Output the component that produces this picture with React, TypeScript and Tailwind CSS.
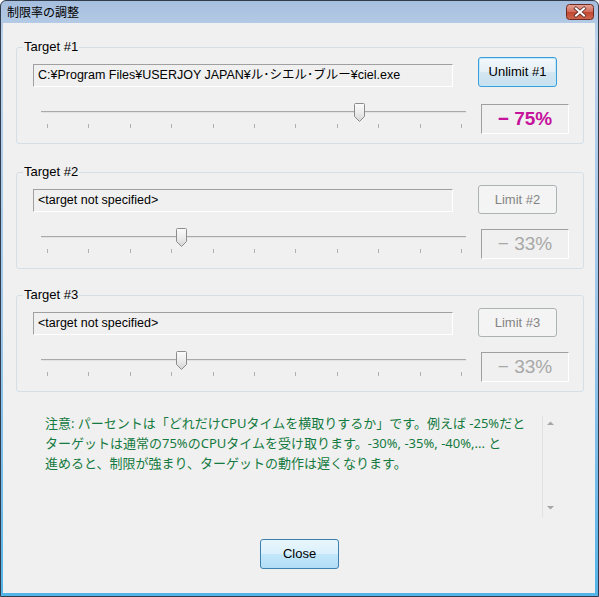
import React from 'react';

const FONT = "font-['Liberation_Sans','Noto_Sans_CJK_JP',sans-serif]";

const Slider = ({ thumb }: { thumb: number }) => {
  const ticks = Array.from({ length: 11 }, (_, i) => 14 + Math.round(i * 41.4));
  const l = thumb;
  return (
    <svg width="433" height="30" className="-mt-[2px] shrink-0">
      <defs>
        <linearGradient id={`th${l}`} x1="0" y1="0" x2="0" y2="1">
          <stop offset="0" stopColor="#fbfbfb" />
          <stop offset="0.5" stopColor="#ececec" />
          <stop offset="1" stopColor="#d4d4d4" />
        </linearGradient>
      </defs>
      <rect x="8" y="9" width="425" height="1" fill="#a9a9a9" />
      <rect x="8" y="10" width="425" height="1" fill="#e2e2e2" />
      {ticks.map((t) => (
        <rect key={t} x={t} y="22" width="1" height="4" fill="#b0b0b0" />
      ))}
      <path
        d={`M${l + 0.5} 2.5 Q${l + 0.5} 1.5 ${l + 1.5} 1.5 H${l + 9.5} Q${l + 10.5} 1.5 ${l + 10.5} 2.5 V14.5 L${l + 5.5} 19.5 L${l + 0.5} 14.5 Z`}
        fill={`url(#th${l})`}
        stroke="#8c8c8c"
      />
    </svg>
  );
};

type GroupProps = {
  n: number;
  path: string;
  active?: boolean;
  pct: string;
  thumb: number;
  className: string;
};

const Group = ({ n, path, active, pct, thumb, className }: GroupProps) => (
  <fieldset className={`ml-[13px] w-[568px] border border-[#d5dfe5] rounded-[3px] pb-[9px] ${className}`}>
    <legend className="ml-[6px] px-[1px] text-[13px] leading-[16px] text-black">Target #{n}</legend>
    <div className="flex items-start h-[32px] pl-[16px]">
      <div className="mt-[9px] w-[420px] h-[23px] border border-t-[#a0a0a0] border-l-[#a0a0a0] border-b-white border-r-white pl-[4px] text-[12.5px] leading-[21px] text-black whitespace-nowrap overflow-hidden">
        {path}
      </div>
      {active ? (
        <button className="ml-[25px] mt-[2px] w-[79px] h-[30px] rounded-[3px] border border-[#3c9dd8] bg-[linear-gradient(#f3f8fb,#e4eff6_50%,#d4e7f2_50%,#c8e0ef)] shadow-[inset_0_0_0_1px_#bfe8fa] text-[13px] text-black">
          Unlimit #{n}
        </button>
      ) : (
        <button className="ml-[25px] mt-[5px] w-[79px] h-[29px] rounded-[3px] border border-[#adb2b5] bg-[#f4f4f4] text-[13px] text-[#838383]">
          Limit #{n}
        </button>
      )}
    </div>
    <div className="flex items-start mt-[17px] pl-[16px]">
      <Slider thumb={thumb} />
      <div
        className={`ml-[15px] w-[88px] h-[30px] border border-t-[#a0a0a0] border-l-[#a0a0a0] border-b-white border-r-white flex items-center justify-center text-[19px] ${
          active ? 'font-bold text-[#c5139c]' : 'text-[#a8a8a8]'
        }`}
      >
        − {pct}
      </div>
    </div>
  </fieldset>
);

const TitleClose = () => (
  <svg width="28" height="16">
    <defs>
      <linearGradient id="cx" x1="0" y1="0" x2="0" y2="1">
        <stop offset="0" stopColor="#e6a79b" />
        <stop offset="0.5" stopColor="#d06a58" />
        <stop offset="0.5" stopColor="#c24530" />
        <stop offset="1" stopColor="#cf6a4f" />
      </linearGradient>
    </defs>
    <rect x="0.5" y="0.5" width="27" height="15" rx="3" fill="url(#cx)" stroke="#6e2a22" />
    <path d="M10 4.5 L18 11.5 M18 4.5 L10 11.5" stroke="#5a2a24" strokeWidth="3.6" strokeLinecap="square" />
    <path d="M10 4.5 L18 11.5 M18 4.5 L10 11.5" stroke="#ffffff" strokeWidth="2" strokeLinecap="square" />
  </svg>
);

export default function App() {
  return (
    <div
      className={`w-[599px] h-[597px] border border-[#313d4c] rounded-t-[6px] bg-[linear-gradient(#a6bfde,#bcd1ea_6%,#9cc6ea_55%,#55b4e8)] flex flex-col ${FONT}`}
    >
      <div className="h-[22px] flex items-center justify-between pl-[6px] pr-[4px]">
        <span className="text-[12px] text-black font-['Noto_Sans_CJK_JP',sans-serif]">制限率の調整</span>
        <TitleClose />
      </div>
      <div className="ml-[2px] w-[592px] h-[570px] bg-[#f0f0f0] flex flex-col">
        <Group n={1} active path="C:¥Program Files¥USERJOY JAPAN¥ル･シエル･ブルー¥ciel.exe" pct="75%" thumb={321} className="mt-[16px]" />
        <Group n={2} path="<target not specified>" pct="33%" thumb={143} className="mt-[20px]" />
        <Group n={3} path="<target not specified>" pct="33%" thumb={143} className="mt-[18px]" />

        <div className="mt-[21px] ml-[42px] h-[104px] flex">
          <div className="w-[497px] text-[13px] leading-[20px] text-[#157a40] whitespace-nowrap font-['Noto_Sans','Noto_Sans_CJK_JP',sans-serif]">
            注意: パーセントは「どれだけCPUタイムを横取りするか」です。例えば -25%だと
            <br />
            ターゲットは通常の75%のCPUタイムを受け取ります。-30%, -35%, -40%,... と
            <br />
            進めると、制限が強まり、ターゲットの動作は遅くなります。
          </div>
          <div className="mt-[3px] w-[16px] h-[101px] border-l border-[#e2e2e2]">
            <svg width="15" height="101">
              <path d="M4 9 L7.5 5.5 L11 9 Z" fill="#a6a6a6" />
              <path d="M4 90 L7.5 93.5 L11 90 Z" fill="#a6a6a6" />
            </svg>
          </div>
        </div>

        <button className="mt-[22px] ml-[257px] w-[79px] h-[30px] rounded-[3px] border border-[#3c7fb1] bg-[linear-gradient(#eaf6fd,#d9f0fc_50%,#c4e8fb_50%,#b2ddf6)] text-[13px] text-black">
          Close
        </button>
      </div>
    </div>
  );
}
